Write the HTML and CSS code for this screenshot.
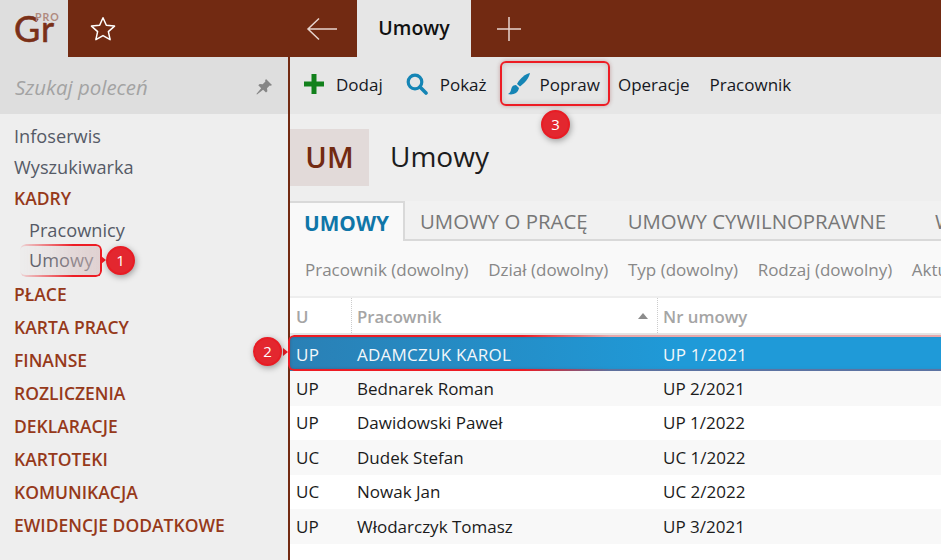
FILE: index.html
```html
<!DOCTYPE html>
<html lang="pl">
<head>
<meta charset="utf-8">
<title>Umowy</title>
<link rel="stylesheet" href="styles.css">
</head>
<body>
<div class="app">
  <header class="topbar">
    <div class="logo"><span class="logo-gr">Gr</span><span class="logo-pro">PRO</span></div>
    <div class="fav">
      <svg width="28" height="28" viewBox="0 0 26 26"><path d="M13 2.500l3.100 7 7.600.8-5.700 5.100 1.600 7.500-6.600-3.800-6.600 3.800 1.600-7.500-5.700-5.100 7.600-.8z" fill="none" stroke="#fff" stroke-width="1.400" stroke-linejoin="round"/></svg>
    </div>
    <div class="nav-back">
      <svg width="32" height="24" viewBox="0 0 32 24"><path d="M31 12H2M13 1.500L2 12l11 10.500" fill="none" stroke="#e8d5cf" stroke-width="1.500"/></svg>
    </div>
    <div class="tab-open">Umowy</div>
    <div class="nav-add">
      <svg width="26" height="26" viewBox="0 0 26 26"><path d="M13 1v24M1 13h24" fill="none" stroke="#e8d5cf" stroke-width="1.500"/></svg>
    </div>
  </header>
  <div class="body">
    <aside class="sidebar">
      <div class="search">
        <span class="search-text">Szukaj poleceń</span>
        <svg class="pin" width="18" height="18" viewBox="0 0 18 18"><path d="M11 1l6 6-1.300.8-1-.3-2.700 2.700.4 3-1.400 1.400-2.900-2.900L2 16.500l-.6-.6L6.200 10.200 3.300 7.300l1.400-1.400 3 .4 2.700-2.700-.3-1z" fill="#868686"/></svg>
      </div>
      <nav class="menu">
        <a class="item">Infoserwis</a>
        <a class="item">Wyszukiwarka</a>
        <a class="group first">KADRY</a>
        <a class="item sub">Pracownicy</a>
        <a class="item sub last">Umowy</a>
        <a class="group">PŁACE</a>
        <a class="group">KARTA PRACY</a>
        <a class="group">FINANSE</a>
        <a class="group">ROZLICZENIA</a>
        <a class="group">DEKLARACJE</a>
        <a class="group">KARTOTEKI</a>
        <a class="group">KOMUNIKACJA</a>
        <a class="group">EWIDENCJE DODATKOWE</a>
      </nav>
    </aside>
    <main class="main">
      <div class="toolbar">
        <button class="tool t-add">
          <svg width="20" height="20" viewBox="0 0 20 20"><path d="M7.500 0h5v7.500H20v5h-7.500V20h-5v-7.500H0v-5h7.500z" fill="#12811c"/></svg>
          <span>Dodaj</span>
        </button>
        <button class="tool t-show">
          <svg width="22" height="22" viewBox="0 0 22 22"><circle cx="9" cy="9" r="6.800" fill="none" stroke="#1585b5" stroke-width="3.200"/><path d="M14 14l6 6" stroke="#1585b5" stroke-width="3.600" stroke-linecap="round"/></svg>
          <span>Pokaż</span>
        </button>
        <button class="tool t-edit">
          <svg width="22" height="22" viewBox="0 0 22 22"><path d="M22 0C17.500 1 12 5 9 11l3 2.500C17 10 21 5 22 0z" fill="#1585b5"/><path d="M8 12c-4 0-4.500 3-5 5-.4 2-1.500 3-3 4 4 1.200 10 0 11-6z" fill="#1585b5"/></svg>
          <span>Popraw</span>
        </button>
        <button class="tool plain">Operacje</button>
        <button class="tool plain">Pracownik</button>
      </div>
      <section class="title-row">
        <div class="badge-um">UM</div>
        <h1 class="title">Umowy</h1>
      </section>
      <div class="tabs">
        <div class="tab active">UMOWY</div>
        <div class="tab">UMOWY O PRACĘ</div>
        <div class="tab">UMOWY CYWILNOPRAWNE</div>
        <div class="tab far">WSZYSTKIE</div>
      </div>
      <div class="filters">
        <span>Pracownik (dowolny)</span>
        <span>Dział (dowolny)</span>
        <span>Typ (dowolny)</span>
        <span>Rodzaj (dowolny)</span>
        <span>Aktualność</span>
      </div>
      <div class="grid">
        <div class="row head">
          <div class="c1">U</div>
          <div class="c2">Pracownik<i class="sort"></i></div>
          <div class="c3">Nr umowy</div>
        </div>
        <div class="row selected"><div class="c1">UP</div><div class="c2">ADAMCZUK KAROL</div><div class="c3">UP 1/2021</div></div>
        <div class="row odd"><div class="c1">UP</div><div class="c2">Bednarek Roman</div><div class="c3">UP 2/2021</div></div>
        <div class="row"><div class="c1">UP</div><div class="c2">Dawidowski Paweł</div><div class="c3">UP 1/2022</div></div>
        <div class="row odd"><div class="c1">UC</div><div class="c2">Dudek Stefan</div><div class="c3">UC 1/2022</div></div>
        <div class="row"><div class="c1">UC</div><div class="c2">Nowak Jan</div><div class="c3">UC 2/2022</div></div>
        <div class="row odd"><div class="c1">UP</div><div class="c2">Włodarczyk Tomasz</div><div class="c3">UP 3/2021</div></div>
      </div>
    </main>
  </div>
  <div class="mark m-umowy"></div>
  <div class="mark m-row"></div>
  <div class="mark m-edit"></div>
  <div class="tail t1"></div>
  <div class="tail t2"></div>
  <div class="dot d1">1</div>
  <div class="dot d2">2</div>
  <div class="dot d3">3</div>
</div>
</body>
</html>
```
FILE: styles.css
```css
* { box-sizing: border-box; }
html, body { margin: 0; height: 100%; overflow: hidden; }
body { font-family: "Open Sans", "Noto Sans", sans-serif; background: #eee; color: #222; }
.app { position: relative; width: 941px; height: 560px; overflow: hidden; display: flex; flex-direction: column; }

.topbar { flex: 0 0 57px; display: flex; background: #722a12; }
.logo { position: relative; flex: 0 0 68px; background: #dedede; }
.logo-gr { position: absolute; left: 14px; top: 5px; font: 400 36px/46px "Lato", sans-serif; -webkit-text-stroke: .6px #7a3018; color: #7a3018; letter-spacing: 1px; }
.logo-pro { position: absolute; left: 35px; top: 10px; font: 700 10.500px/14px "Lato", sans-serif; color: #b08a7e; letter-spacing: 1px; }
.fav { flex: 0 0 70px; display: flex; align-items: center; justify-content: center; }
.nav-back { flex: 0 0 219px; display: flex; align-items: center; justify-content: flex-end; padding-right: 19px; }
.tab-open { flex: 0 0 114px; background: #e6e6e6; color: #111; font-size: 19.500px; font-weight: 600; display: flex; align-items: center; justify-content: center; padding-bottom: 2px; }
.nav-add { flex: 0 0 75px; display: flex; align-items: center; justify-content: center; }

.body { flex: 1; display: flex; min-height: 0; }
.sidebar { flex: 0 0 290px; border-right: 2px solid #722a12; background: #eee; }
.search { height: 57px; background: #dedede; display: flex; align-items: center; justify-content: space-between; padding: 2px 15px 0 15px; }
.search-text { font-size: 20.400px; font-style: italic; color: #a3a3a3; }
.pin { filter: blur(.3px); }
.menu { display: flex; flex-direction: column; padding-top: 7px; }
.item { height: 31px; line-height: 31px; padding-left: 14px; font-size: 18.200px; color: #555a66; }
.item.sub { padding-left: 29px; }
.item.last { height: 30px; line-height: 29px; margin-bottom: 2px; }
.group { height: 33px; line-height: 33px; padding-left: 14px; font-size: 17.500px; font-weight: 600; color: #96391a; white-space: nowrap; }
.group.first { height: 31.500px; line-height: 31px; }

.main { flex: 1; min-width: 0; background: #eee; overflow: hidden; }
.toolbar { height: 57px; background: #e6e6e6; display: flex; align-items: center; padding: 0 0 3px 14px; }
.tool { border: 0; background: none; padding: 0; font: 400 17px "Open Sans", sans-serif; color: #16181f; display: flex; align-items: center; height: 44px; white-space: nowrap; }
.t-add { gap: 12px; margin-right: 23px; }
.t-show { gap: 12px; margin-right: 21px; }
.t-edit { gap: 10px; margin-right: 18px; }
.plain { margin-right: 20px; }

.title-row { height: 87px; display: flex; align-items: flex-start; padding-top: 15px; }
.badge-um { width: 79px; height: 57px; background: #e2dad9; color: #722a12; font-size: 29px; font-weight: 600; display: flex; align-items: center; justify-content: center; padding-bottom: 3px; }
.title { margin: 0 0 0 21px; font-size: 28px; font-weight: 400; line-height: 55px; color: #1c1c1c; }

.tabs { height: 40px; background: #f1f1f1; display: flex; border-bottom: 2px solid #d9d9d9; white-space: nowrap; }
.tab { padding: 0 16px 0 16px; font-size: 20.400px; line-height: 40px; color: #777; margin-right: 8px; }
.tab:first-child { margin-right: 0; }
.tab.far { margin-left: 9px; }
.tab.active { height: 40px; padding: 0 14px; background: #f9f9f9; border: 2px solid #d9d9d9; border-bottom: 0; border-left: 0; color: #0f76a8; font-size: 20.800px; font-weight: 700; margin-right: -1px; }

.filters { height: 57px; background: #f9f9f9; display: flex; align-items: center; gap: 19.700px; padding: 2px 0 0 15px; font-size: 17px; color: #888; white-space: nowrap; border-bottom: 2px solid #eee; }

.grid { background: #fff; height: 262px; }
.row { height: 34.500px; display: flex; align-items: center; font-size: 17px; color: #1b1b1b; background: #fff; white-space: nowrap; }
.row > div { height: 100%; display: flex; align-items: center; padding-left: 6px; }
.odd { background: #f8f8f8; }
.c1 { flex: 0 0 61px; }
.c2 { flex: 0 0 306px; position: relative; }
.c3 { flex: 1; }
.head { height: 39px; color: #a5a5a5; font-size: 16.800px; font-weight: 600; border-bottom: 4px solid #e4e4e4; background: #fff; }
.head > div { padding-top: 2px; }
.row.head .c2, .row.head .c3 { border-left: 1px dotted #ccc; padding-left: 5px; }
.sort { position: absolute; right: 9px; top: 15px; width: 0; height: 0; border: 5.500px solid transparent; border-top: 0; border-bottom: 6px solid #8c8c8c; }
.selected { height: 34px; background: linear-gradient(90deg, #2a80b5, #1f9ad8 60%); color: #f2f7fa; letter-spacing: .25px; }

.mark { position: absolute; border: 2px solid #ed1c24; border-radius: 6px; }
.m-umowy { left: 20px; top: 244px; width: 82px; height: 33px; border-left: 0; background: linear-gradient(90deg, rgba(214,190,190,.2), rgba(214,190,190,.6)); -webkit-mask-image: linear-gradient(90deg, rgba(0,0,0,.1), #000 65%); mask-image: linear-gradient(90deg, rgba(0,0,0,.1), #000 65%); }
.m-row { left: 288px; top: 335px; width: 670px; height: 36px; border-right: 0; box-shadow: inset 0 0 3px rgba(120,0,0,.3); -webkit-mask-image: linear-gradient(90deg, #000 35%, rgba(0,0,0,.3) 48%); mask-image: linear-gradient(90deg, #000 35%, rgba(0,0,0,.3) 48%); }
.m-edit { left: 500px; top: 61px; width: 110px; height: 45px; box-shadow: inset 0 0 6px rgba(0,0,0,.15), 0 0 4px rgba(120,0,0,.3); }
.tail { position: absolute; width: 0; height: 0; border: 4px solid transparent; }
.t1 { left: 101px; top: 256px; border-left: 5px solid #ed1c24; border-right: 0; }
.t2 { left: 283px; top: 348px; border-left: 5px solid #ed1c24; border-right: 0; }
.dot { position: absolute; width: 29px; height: 29px; border-radius: 50%; background: #e3272f; border: 2px solid #e81c24; color: #fff; font-size: 15px; text-align: center; line-height: 25px; box-shadow: 1px 2px 6px rgba(0,0,0,.35); }
.d1 { left: 106px; top: 246px; }
.d2 { left: 253px; top: 337px; }
.d3 { left: 541px; top: 110px; }
```
